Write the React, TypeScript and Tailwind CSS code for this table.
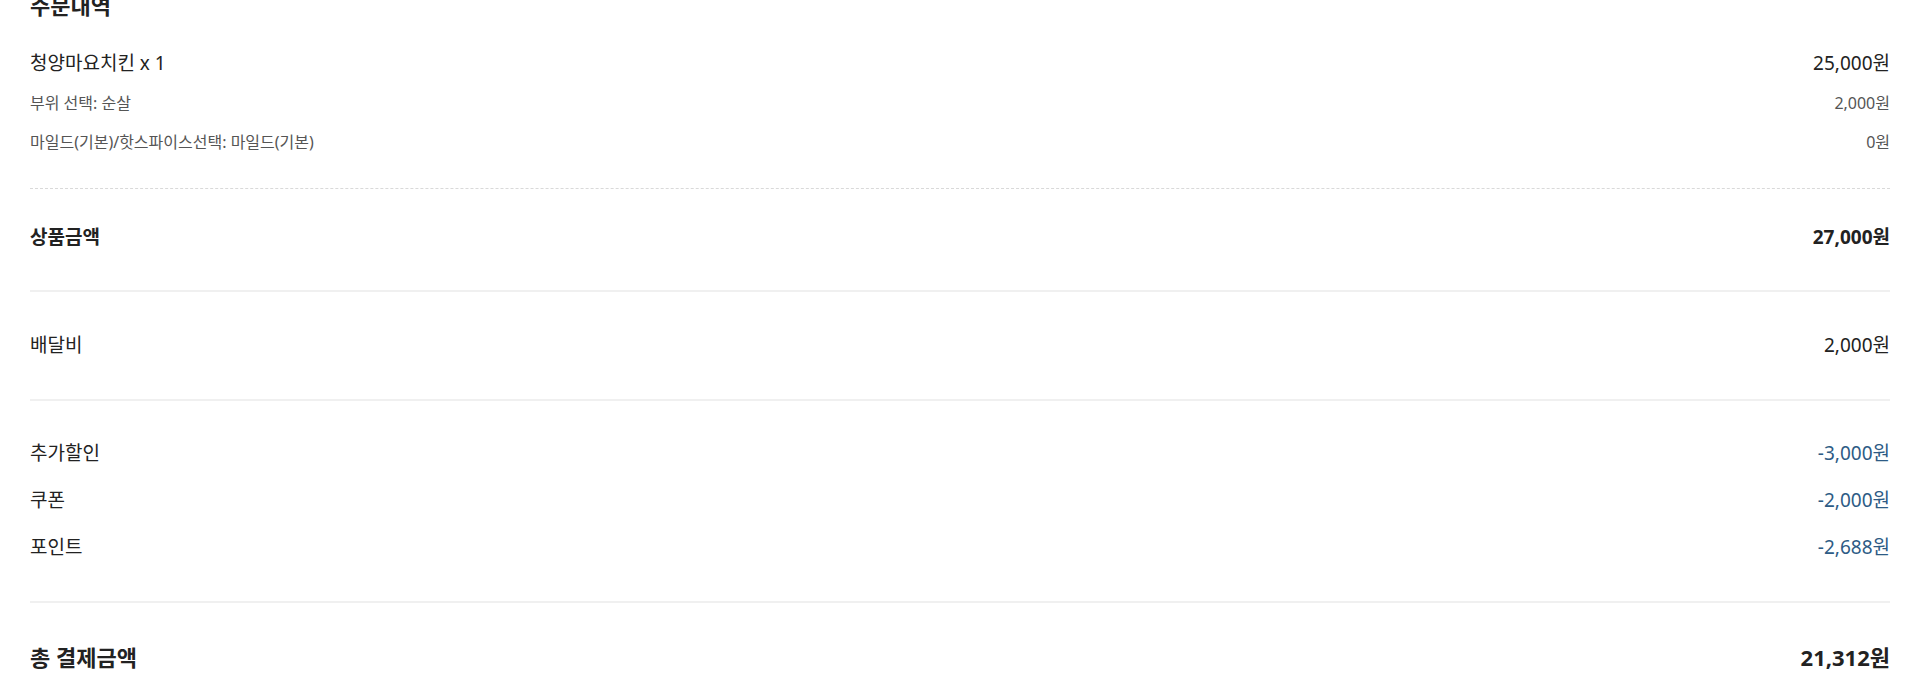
const font = "font-['Noto_Sans','Noto_Sans_CJK_KR',sans-serif]"

type Line = { label: string; value: string }

const options: Line[] = [
  { label: "부위 선택: 순살", value: "2,000원" },
  { label: "마일드(기본)/핫스파이스선택: 마일드(기본)", value: "0원" },
]

const discounts: Line[] = [
  { label: "추가할인", value: "-3,000원" },
  { label: "쿠폰", value: "-2,000원" },
  { label: "포인트", value: "-2,688원" },
]

function Row({ label, value, className, valueClassName }: Line & { className?: string; valueClassName?: string }) {
  return (
    <div className={`flex items-center justify-between ${className ?? ""}`}>
      <span>{label}</span>
      <span className={valueClassName}>{value}</span>
    </div>
  )
}

export default function App() {
  return (
    <div className={`min-h-screen overflow-hidden bg-white px-[30px] text-[#222] ${font}`}>
      <h2 className="-mt-[15px] flex h-[40px] items-center text-[22px] font-bold">주문내역</h2>

      <div className="border-b border-dashed border-[#d9d9d9] pt-[18px] pb-[27px]">
        <Row label="청양마요치킨 x 1" value="25,000원" className="h-[40px] text-[19px]" />
        {options.map((o, i) => (
          <Row
            key={o.label}
            {...o}
            className={`${i === 0 ? "h-[40px]" : "h-[38px]"} text-[16px] text-[#555]`}
          />
        ))}
      </div>

      <div className="border-b-2 border-[#f0f0f0] pt-[35px] pb-[40px]">
        <Row label="상품금액" value="27,000원" className="h-[26px] text-[19px] font-bold" />
      </div>

      <div className="border-b-2 border-[#f0f0f0] pt-[40px] pb-[41px]">
        <Row label="배달비" value="2,000원" className="h-[26px] text-[19px]" />
      </div>

      <div className="flex flex-col gap-[21px] border-b-2 border-[#f0f0f0] pt-[39px] pb-[41px]">
        {discounts.map((d) => (
          <Row key={d.label} {...d} className="h-[26px] text-[19px]" valueClassName="text-[#2d5b85]" />
        ))}
      </div>

      <div className="pt-[41px] pb-[30px]">
        <Row label="총 결제금액" value="21,312원" className="h-[26px] text-[22px] font-bold" />
      </div>
    </div>
  )
}
